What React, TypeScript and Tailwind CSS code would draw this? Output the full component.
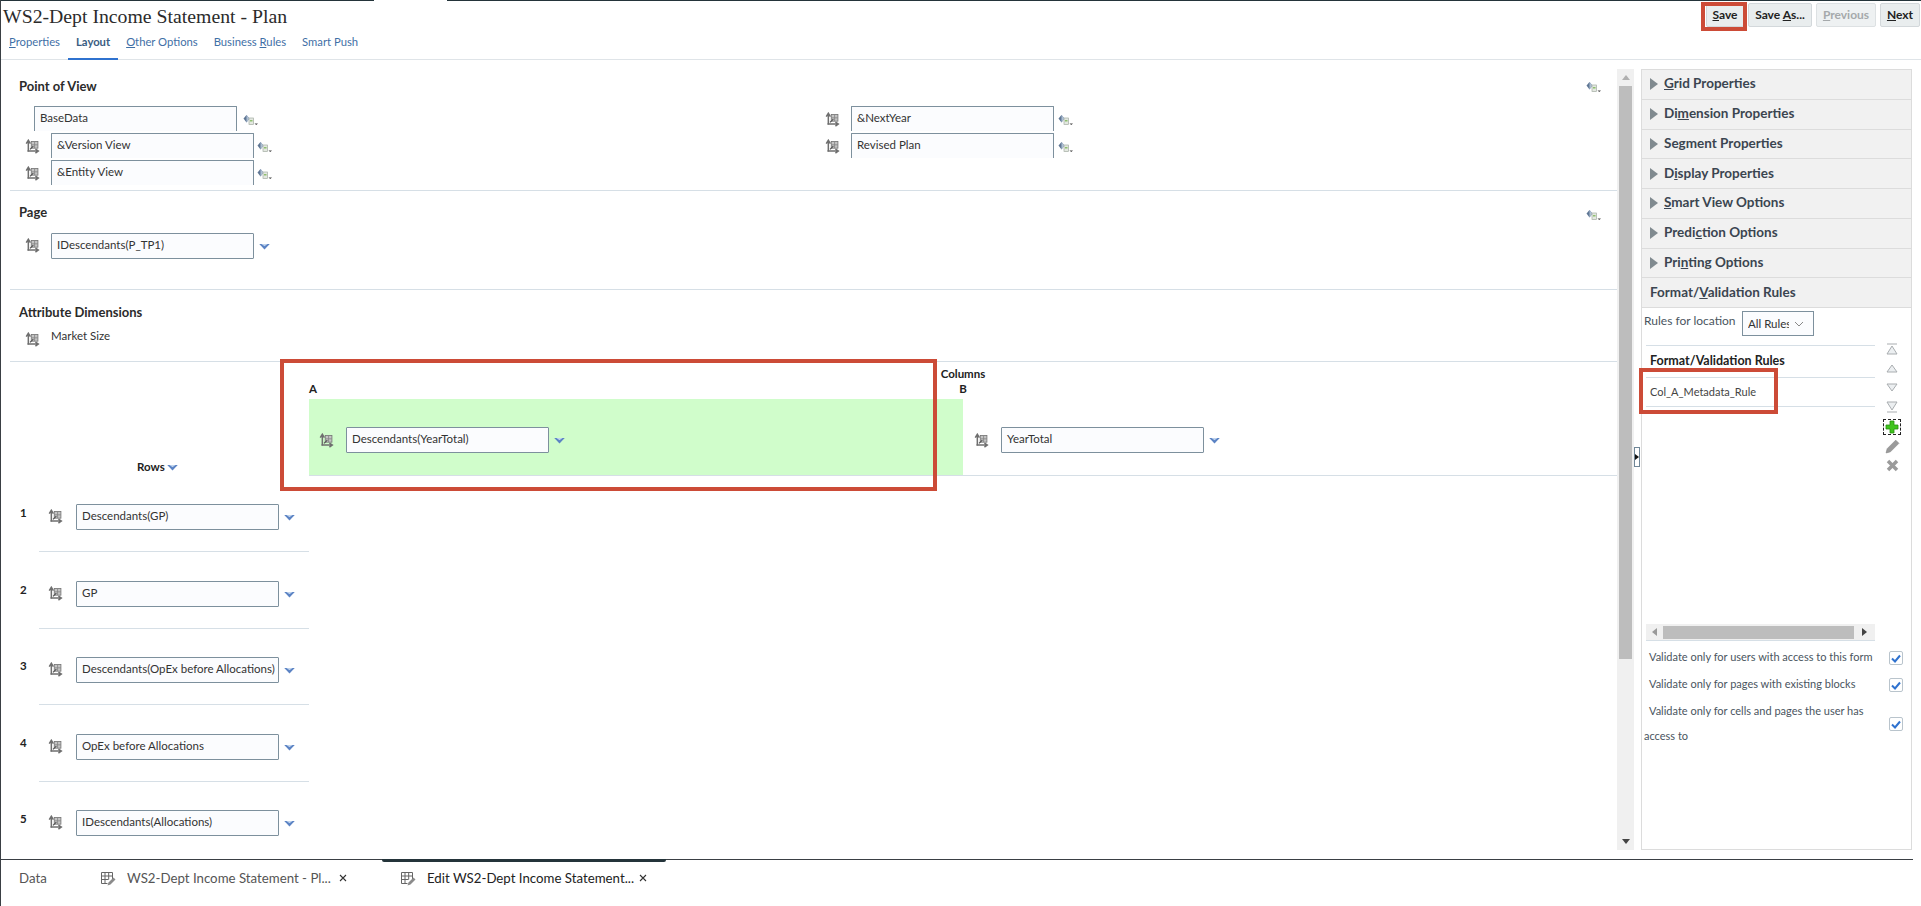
import React from "react";

const MemberIcon = () => (
  <svg width="15" height="15" viewBox="0 0 18 18" className="shrink-0" fill="none">
    <path d="M4 15V3M1.500 5.500L4 1.500l2.500 4" stroke="#6f6f6f" strokeWidth="1.800" />
    <path d="M3 14.500h12M12.500 12l3.500 2.500-3.500 2.500" stroke="#6f6f6f" strokeWidth="1.800" />
    <rect x="7.500" y="3" width="8" height="8" fill="#c4c4c4" stroke="#757575" />
    <path d="M7.500 7h8M11.500 3v8" stroke="#858585" />
    <path d="M6 12.500l4-4" stroke="#555" strokeWidth="1.500" />
  </svg>
);

const MenuIcon = () => (
  <svg width="16" height="12" viewBox="0 0 16 12" className="shrink-0">
    <path d="M0.500 4.500L3.500 1l3 3.500-3 4z" fill="#5f7694" />
    <path d="M3.500 1l3 3.500-3 4z" fill="#aebfd4" />
    <rect x="6" y="4" width="4.500" height="6.500" fill="#e3e8e0" stroke="#a3aca3" strokeWidth="0.700" />
    <rect x="7" y="6" width="2.500" height="1.500" fill="#8fbf6f" />
    <path d="M11.500 9.500h3.500l-1.750 1.500z" fill="#444" />
  </svg>
);

const Chevron = () => (
  <svg width="11" height="7" viewBox="0 0 12 8" className="shrink-0">
    <path d="M0 1h12L6 7.500z" fill="#5b83c4" />
    <path d="M2.500 1.200h7L6 3.800z" fill="#c2d5ee" />
  </svg>
);

const Field = ({ text, open, h = "h-[26px]" }: { text: string; open?: boolean; h?: string }) => (
  <div
    className={`w-[203px] ${h} shrink-0 whitespace-nowrap bg-[#fbfcfe] border border-[#7d909d] px-[5px] pt-[3px] text-[11.5px] leading-[16px] text-[#333] ${
      open ? "border-b-0 rounded-t-[1px]" : "rounded-[1px]"
    }`}
  >
    {text}
  </div>
);

const Divider = ({ className = "" }: { className?: string }) => <div className={`h-px bg-[#d6dfe6] ${className}`} />;

const PovRow = ({ text, icon, indent, gap }: { text: string; icon: boolean; indent: string; gap: string }) => (
  <div className={`flex items-start h-[27px] ${indent}`}>
    {icon && (
      <div className="w-[32px] pl-[6px] pt-[6px]">
        <MemberIcon />
      </div>
    )}
    <Field text={text} open h="h-[25px]" />
    <div className={`${gap} pt-[8px]`}>
      <MenuIcon />
    </div>
  </div>
);

const SectionTitle = ({ children }: { children: React.ReactNode }) => (
  <div className="text-[13px] leading-[18px] font-bold text-[#2b2b2b]">{children}</div>
);

const rows = [
  ["1", "Descendants(GP)"],
  ["2", "GP"],
  ["3", "Descendants(OpEx before Allocations)"],
  ["4", "OpEx before Allocations"],
  ["5", "IDescendants(Allocations)"],
];

const RowItem = ({ n, text, last }: { n: string; text: string; last: boolean }) => (
  <div className="h-[76.5px]">
    <div className="flex h-[47px] items-start">
      <div className="w-[39px] pl-[19px] pt-[1px] text-[11.5px] font-bold leading-[16px] text-[#222]">{n}</div>
      <div className="w-[36px] pl-[8px] pt-[5px]">
        <MemberIcon />
      </div>
      <Field text={text} />
      <div className="pl-[5px] pt-[10px]">
        <Chevron />
      </div>
    </div>
    {!last && <Divider className="ml-[38px] w-[270px]" />}
  </div>
);

const accText: React.ReactNode[] = [
  <><u>G</u>rid Properties</>,
  <>Di<u>m</u>ension Properties</>,
  <>Segment Properties</>,
  <>D<u>i</u>splay Properties</>,
  <><u>S</u>mart View Options</>,
  <>Predi<u>c</u>tion Options</>,
  <>Pri<u>n</u>ting Options</>,
];

const TopBtn = ({ children, disabled, w }: { children: React.ReactNode; disabled?: boolean; w: string }) => (
  <div
    className={`${w} h-[24px] flex items-center justify-center rounded-[2px] border text-[12px] font-bold ${
      disabled ? "bg-[#eef1f2] border-[#dde1e3] text-[#a5a9ab]" : "bg-[#e9edee] border-[#d3d8db] text-[#222]"
    }`}
  >
    <span>{children}</span>
  </div>
);

const Tab = ({ children, active }: { children: React.ReactNode; active?: boolean }) => (
  <div
    className={`h-[27px] px-[8px] text-[11.25px] leading-[16px] pt-[1px] ${
      active ? "border-b-2 border-[#2f72cf] font-bold text-[#3a5d82]" : "text-[#3f6fa6]"
    }`}
  >
    {children}
  </div>
);

const MoveIcon = ({ d }: { d: string }) => (
  <svg width="12" height="12" viewBox="0 0 12 12">
    <path d={d} fill="#eceff1" stroke="#a9adb0" strokeWidth="1" />
  </svg>
);

const Check = ({ mt }: { mt: string }) => (
  <div className={`${mt} w-[14px] h-[14px] border border-[#b9c4cc] rounded-[2px] bg-white flex items-center justify-center shrink-0`}>
    <svg width="10" height="9" viewBox="0 0 10 9">
      <path d="M1 4.500l3 3 5-6" fill="none" stroke="#2f72cf" strokeWidth="2" />
    </svg>
  </div>
);

const GridPen = () => (
  <svg width="16" height="16" viewBox="0 0 16 16" className="shrink-0" fill="none">
    <path d="M1.500 1.500h11v8M1.500 1.500v11h6M1.500 5h11M1.500 8.500h7M5 1.500v11M8.700 1.500v7" stroke="#666" strokeWidth="1" />
    <path d="M7.500 14.500l1-3 5-5 2 2-5 5z" fill="#8b8b8b" />
  </svg>
);

const XMark = () => (
  <svg width="8" height="8" viewBox="0 0 8 8" className="shrink-0 -mt-[3px]">
    <path d="M1 1l6 6M7 1l-6 6" stroke="#333" strokeWidth="1.100" />
  </svg>
);

export default function App() {
  return (
    <div className="relative w-[1921px] h-[906px] overflow-hidden bg-white border-l border-[#3a3f44] font-['Lato',sans-serif] text-[#333]">
      <div className="flex h-px -ml-px">
        <div className="w-[374px] bg-[#24343a]" />
        <div className="w-[73px]" />
        <div className="flex-1 bg-[#24343a]" />
      </div>

      <header className="h-[59px] border-b border-[#dfe4e8] flex justify-between">
        <div>
          <div className="pl-[2px] pt-[1px] h-[31px] font-['Liberation_Serif',serif] text-[19.75px] leading-[28px] text-[#2b2b2b]">
            WS2-Dept Income Statement - Plan
          </div>
          <div className="flex pt-px">
            <Tab><u>P</u>roperties</Tab>
            <Tab active>Layout</Tab>
            <Tab><u>O</u>ther Options</Tab>
            <Tab>Business <u>R</u>ules</Tab>
            <Tab>Smart Push</Tab>
          </div>
        </div>
        <div className="flex pt-[2px] pr-[1px] h-[28px]">
          <TopBtn w="w-[38px]"><u>S</u>ave</TopBtn>
          <div className="w-[4px]" />
          <TopBtn w="w-[64px]">Save <u>A</u>s...</TopBtn>
          <div className="w-[4px]" />
          <TopBtn w="w-[60px]" disabled><u>P</u>revious</TopBtn>
          <div className="w-[4px]" />
          <TopBtn w="w-[40px]"><u>N</u>ext</TopBtn>
        </div>
      </header>

      <div className="flex h-[799px]">
        <main className="w-[1616px] shrink-0 overflow-hidden">
          <div className="flex justify-between pl-[18px] pr-[15px] pt-[17px] h-[46px]">
            <SectionTitle>Point of View</SectionTitle>
            <div className="pt-[4px]"><MenuIcon /></div>
          </div>
          <div className="flex h-[84px]">
            <div className="w-[818px] pl-[18px]">
              <PovRow text="BaseData" icon={false} indent="pl-[15px]" gap="pl-[6px]" />
              <PovRow text="&Version View" icon indent="" gap="pl-[3px]" />
              <PovRow text="&Entity View" icon indent="" gap="pl-[3px]" />
            </div>
            <div>
              <PovRow text="&NextYear" icon indent="" gap="pl-[4px]" />
              <PovRow text="Revised Plan" icon indent="" gap="pl-[4px]" />
            </div>
          </div>
          <Divider className="ml-[9px]" />
          <div className="flex justify-between pl-[18px] pr-[15px] pt-[12px] h-[42px]">
            <SectionTitle>Page</SectionTitle>
            <div className="pt-[6px]"><MenuIcon /></div>
          </div>
          <div className="flex items-start pl-[18px] h-[56px]">
            <div className="w-[32px] pl-[6px] pt-[5px]"><MemberIcon /></div>
            <Field text="IDescendants(P_TP1)" />
            <div className="pl-[5px] pt-[10px]"><Chevron /></div>
          </div>
          <Divider className="ml-[9px]" />
          <div className="pl-[18px] pt-[13px] h-[36px]">
            <SectionTitle>Attribute Dimensions</SectionTitle>
          </div>
          <div className="flex items-start pl-[18px] h-[35px]">
            <div className="w-[32px] pl-[6px] pt-[6px]"><MemberIcon /></div>
            <div className="text-[11.5px] leading-[16px] pt-[2px]">Market Size</div>
          </div>
          <Divider className="ml-[9px]" />

          <div className="flex h-[114px]">
            <div className="w-[308px] shrink-0 flex items-end pl-[136px] pb-[0px]">
              <div className="flex items-center gap-[2px] h-0 -translate-y-[9px] whitespace-nowrap">
                <span className="text-[11.5px] font-bold text-[#222]">Rows</span>
                <Chevron />
              </div>
            </div>
            <div className="flex flex-col w-[1308px] shrink-0">
              <div className="h-[37px] flex">
                <div className="w-[654px] flex flex-col justify-end">
                  <div className="text-[11.5px] font-bold leading-[16px] text-[#222] pb-[2px]">A</div>
                </div>
                <div className="flex flex-col -ml-[23px] w-[46px] items-center text-[11.5px] font-bold leading-[15px] text-[#222] pt-[4px] whitespace-nowrap">
                  <div>Columns</div>
                  <div>B</div>
                </div>
              </div>
              <div className="h-[77px] flex border-b border-[#d6dfe6]">
                <div className="w-[654px] h-[76px] bg-[#d0fdcb] flex items-start pt-[28px] pl-[10px]">
                  <div className="w-[27px] pt-[6px]"><MemberIcon /></div>
                  <Field text="Descendants(YearTotal)" />
                  <div className="pl-[5px] pt-[10px]"><Chevron /></div>
                </div>
                <div className="flex items-start pt-[28px] pl-[11px]">
                  <div className="w-[27px] pt-[6px]"><MemberIcon /></div>
                  <Field text="YearTotal" />
                  <div className="pl-[5px] pt-[10px]"><Chevron /></div>
                </div>
              </div>
            </div>
          </div>

          <div className="pt-[28px]">
            {rows.map(([n, t], i) => (
              <RowItem key={n} n={n} text={t} last={i === rows.length - 1} />
            ))}
          </div>
        </main>

        <div className="w-[17px] shrink-0 h-[781px] mt-[9px] bg-[#f0f0f0] flex flex-col items-center justify-between">
          <div className="w-full flex flex-col items-center">
            <div className="h-[17px] flex items-center"><svg width="8" height="5" viewBox="0 0 8 5"><path d="M0 5l4-5 4 5z" fill="#b0b0b0" /></svg></div>
            <div className="w-[13px] h-[573px] bg-[#bdbdbd]" />
          </div>
          <div className="h-[17px] flex items-center"><svg width="8" height="5" viewBox="0 0 8 5"><path d="M0 0l4 5 4-5z" fill="#444" /></svg></div>
        </div>

        <div className="w-[7px] shrink-0 flex flex-col">
          <div className="h-[387px]" />
          <div className="w-[6px] h-[20px] border border-[#6f8697] bg-white flex items-center justify-center">
            <svg width="4" height="6" viewBox="0 0 4 6"><path d="M0 0l4 3-4 3z" fill="#111" /></svg>
          </div>
        </div>

        <aside className="w-[271px] shrink-0 h-[781px] mt-[9px] border border-[#dcdcdc] flex flex-col">
          {accText.map((t, i) => (
            <div key={i} className="h-[29.75px] shrink-0 bg-[#f1f1f1] border-b border-[#dcdcdc] flex items-center pl-[8px] pb-[2px] gap-[6px] text-[13.5px] font-bold text-[#3b4550]">
              <svg width="8" height="12" viewBox="0 0 8 12" className="shrink-0 mt-[2px]"><path d="M0 0l8 6-8 6z" fill="#808a8f" /></svg>
              <span>{t}</span>
            </div>
          ))}
          <div className="h-[29.75px] shrink-0 bg-[#f1f1f1] border-b border-[#dcdcdc] flex items-center pl-[8px] pb-[2px] text-[13.5px] font-bold text-[#3b4550]">
            <span>Format/<u>V</u>alidation Rules</span>
          </div>

          <div className="flex items-start h-[29px] pl-[2px] pt-[3px]">
            <span className="text-[12px] leading-[16px] pt-[2px] text-[#4a5560] w-[98px] whitespace-nowrap">Rules for location</span>
            <div className="w-[72px] h-[25px] border border-[#7d909d] bg-[#fbfcfe] flex items-center pl-[5px] text-[11.5px] overflow-hidden">
              <span className="w-[41px] overflow-hidden whitespace-nowrap">All Rules</span>
              <svg width="10" height="6" viewBox="0 0 10 6" className="ml-[5px]"><path d="M1 1l4 4 4-4" fill="none" stroke="#888" strokeWidth="1" /></svg>
            </div>
          </div>

          <div className="flex flex-1 min-h-0 pl-[4px] pt-[8px]">
            <div className="w-[229px] shrink-0 flex flex-col">
              <Divider />
              <div className="h-[31px] flex items-center pl-[4px] text-[12.5px] font-bold text-[#222]">Format/Validation Rules</div>
              <Divider />
              <div className="h-[28px] flex items-center pl-[4px] text-[11px] text-[#444]">Col_A_Metadata_Rule</div>
              <Divider />
              <div className="h-[217px]" />
              <div className="h-[17px] bg-[#f0f0f0] border-b border-[#d6dfe6] flex items-center shrink-0">
                <div className="w-[17px] flex justify-center"><svg width="5" height="8" viewBox="0 0 5 8"><path d="M5 0L0 4l5 4z" fill="#999" /></svg></div>
                <div className="w-[191px] h-[13px] bg-[#bdbdbd]" />
                <div className="w-[21px] flex justify-center"><svg width="5" height="8" viewBox="0 0 5 8"><path d="M0 0l5 4-5 4z" fill="#444" /></svg></div>
              </div>
            </div>
            <div className="w-[34px] flex flex-col items-center -mt-[6px]">
              <div className="h-[19.5px] flex items-center"><MoveIcon d="M1 1h10M1 11h10L6 3z" /></div>
              <div className="h-[19.5px] flex items-center"><MoveIcon d="M1 10h10L6 3z" /></div>
              <div className="h-[19.5px] flex items-center"><MoveIcon d="M1 2h10L6 9z" /></div>
              <div className="h-[19.5px] flex items-center"><MoveIcon d="M1 1h10L6 9zM1 11h10" /></div>
              <div className="h-[19.5px] flex items-center">
                <div className="w-[18px] h-[16px] border border-dashed border-[#222] flex items-center justify-center">
                  <svg width="14" height="14" viewBox="0 0 14 14"><path d="M5 1h4v4h4v4H9v4H5V9H1V5h4z" fill="#3fc41c" stroke="#2a8f12" strokeWidth="0.8" /></svg>
                </div>
              </div>
              <div className="h-[19.5px] flex items-center">
                <svg width="15" height="16" viewBox="0 0 14 15"><path d="M1 14l1-4 8-8 3 3-8 8z" fill="#9a9a9a" stroke="#888" strokeWidth="0.6" /></svg>
              </div>
              <div className="h-[19.5px] flex items-center">
                <svg width="13" height="13" viewBox="0 0 13 13"><path d="M2 2l9 9M11 2l-9 9" stroke="#9b9b9b" strokeWidth="3.500" /></svg>
              </div>
            </div>
          </div>
          <div className="h-[208px] shrink-0 pl-[2px] text-[11px] leading-[18px] text-[#4a5560]">
            <div className="h-[27px] flex items-start pt-[7px]">
              <span className="w-[245px] pl-[5px] whitespace-nowrap">Validate only for users with access to this form</span>
              <Check mt="mt-[3px]" />
            </div>
            <div className="h-[27px] flex items-start pt-[7px]">
              <span className="w-[245px] pl-[5px] whitespace-nowrap">Validate only for pages with existing blocks</span>
              <Check mt="mt-[3px]" />
            </div>
            <div className="flex items-center h-[52px] pt-[4px]">
              <span className="w-[245px] leading-[25px] indent-[5px] pr-[8px]">Validate only for cells and pages the user has access to</span>
              <Check mt="mt-[2px]" />
            </div>
          </div>
        </aside>
      </div>

      <footer className="relative h-[47px] border-t border-[#3a3f44] mr-[8px] flex items-center text-[13.25px] pb-[8px]">
        <div className="absolute left-[381px] -top-px w-[284px] h-[3px] bg-[#24343a] rounded-b-[2px]" />
        <div className="pl-[18px] w-[99px] text-[#555]">Data</div>
        <GridPen />
        <span className="ml-[11px] w-[201px] text-[#555] whitespace-nowrap">WS2-Dept Income Statement - Pl...</span>
        <span className="ml-[11px]"><XMark /></span>
        <span className="ml-[53px]"><GridPen /></span>
        <span className="ml-[11px] w-[206px] text-[#222] whitespace-nowrap">Edit WS2-Dept Income Statement...</span>
        <span className="ml-[6px]"><XMark /></span>
      </footer>

      {/* annotation boxes drawn on top of the screenshot */}
      <div className="absolute left-[1700px] top-[2px] w-[46px] h-[29px] border-[4px] border-[#cc4b37]" />
      <div className="absolute left-[279px] top-[359px] w-[657px] h-[132px] border-[4px] border-[#cc4b37]" />
      <div className="absolute left-[1638px] top-[368px] w-[139px] h-[46px] border-[4px] border-[#cc4b37]" />
    </div>
  );
}
